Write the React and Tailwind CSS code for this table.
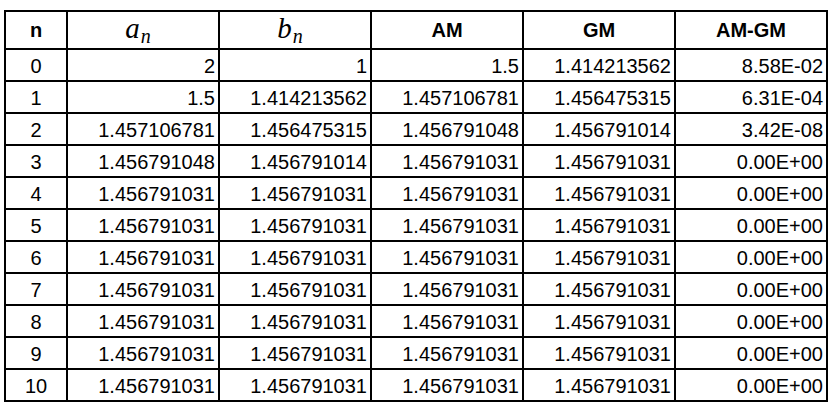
const rows = [
  ["0", "2", "1", "1.5", "1.414213562", "8.58E-02"],
  ["1", "1.5", "1.414213562", "1.457106781", "1.456475315", "6.31E-04"],
  ["2", "1.457106781", "1.456475315", "1.456791048", "1.456791014", "3.42E-08"],
  ["3", "1.456791048", "1.456791014", "1.456791031", "1.456791031", "0.00E+00"],
  ["4", "1.456791031", "1.456791031", "1.456791031", "1.456791031", "0.00E+00"],
  ["5", "1.456791031", "1.456791031", "1.456791031", "1.456791031", "0.00E+00"],
  ["6", "1.456791031", "1.456791031", "1.456791031", "1.456791031", "0.00E+00"],
  ["7", "1.456791031", "1.456791031", "1.456791031", "1.456791031", "0.00E+00"],
  ["8", "1.456791031", "1.456791031", "1.456791031", "1.456791031", "0.00E+00"],
  ["9", "1.456791031", "1.456791031", "1.456791031", "1.456791031", "0.00E+00"],
  ["10", "1.456791031", "1.456791031", "1.456791031", "1.456791031", "0.00E+00"],
];

function MathHead({ base }) {
  return (
    <div className="h-[36px] bg-white flex items-center justify-center pr-[10px] pb-[3px]">
      <span className="font-['Liberation_Serif',serif] italic text-[29px] leading-none text-black">
        {base}
        <sub className="text-[20px] italic relative top-[5px] align-baseline ml-[1px]">n</sub>
      </span>
    </div>
  );
}

function Head({ children }) {
  return (
    <div className="h-[36px] bg-white flex items-center justify-center font-bold text-[20px] text-black">
      {children}
    </div>
  );
}

export default function App() {
  return (
    <div className="w-[834px] h-[406px] bg-white font-['Liberation_Sans',Arial,sans-serif]">
      <div className="pt-[10px] pl-[4px]">
        <div className="inline-grid grid-cols-[60px_repeat(5,150px)] gap-[2px] p-[2px] bg-black">
          <Head>n</Head>
          <MathHead base="a" />
          <MathHead base="b" />
          <Head>AM</Head>
          <Head>GM</Head>
          <Head>AM-GM</Head>
          {rows.map((r) =>
            r.map((c, i) => (
              <div
                key={r[0] + "-" + i}
                className={
                  "h-[30px] bg-white flex items-center pt-[1px] text-[20px] leading-none text-black " +
                  (i === 0 ? "justify-center" : "justify-end pr-[3px]")
                }
              >
                {c}
              </div>
            ))
          )}
        </div>
      </div>
    </div>
  );
}
